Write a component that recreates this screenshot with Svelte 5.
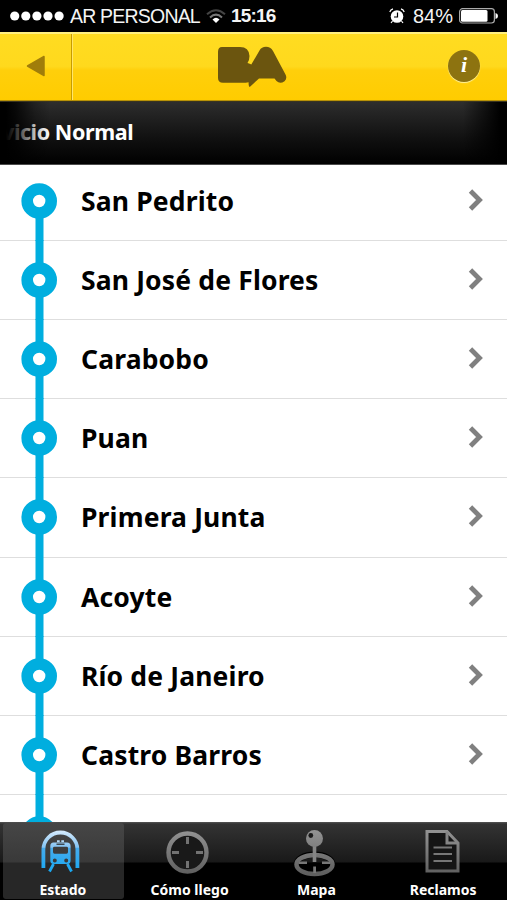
<script>
  const stations = ['San Pedrito', 'San José de Flores', 'Carabobo', 'Puan', 'Primera Junta', 'Acoyte', 'Río de Janeiro', 'Castro Barros', ''];
  const tabs = ['Estado', 'Cómo llego', 'Mapa', 'Reclamos'];
</script>

<div class="phone">
  <div class="status">
    <svg class="dots" width="54" height="10" viewBox="0 0 54 10" fill="#fff">
      {#each [0, 1, 2, 3, 4] as n}<circle cx={4.7 + n * 11.1} cy="5" r="4.6" />{/each}
    </svg>
    <span class="carrier">AR PERSONAL</span>
    <svg class="wifi" width="20" height="15" viewBox="0 0 20 15" fill="none" stroke-width="2">
      <path d="M1 5.2Q10-2.8 19 5.2" stroke="#444" />
      <path d="M4 8.4Q10 2.8 16 8.4" stroke="#777" />
      <path d="M6.5 10.5Q10 7 13.500 10.500L10 14Z" fill="#fff" />
    </svg>
    <span class="time">15:16</span>
    <svg class="alarm" width="16" height="16" viewBox="0 0 16 16">
      <circle cx="8" cy="8.500" r="6.300" fill="#fff" />
      <path d="M.8 4Q1.500 1.500 4 .8M12 .8Q14.500 1.500 15.200 4M3.500 13L2 15M12.500 13L14 15" fill="none" stroke="#fff" stroke-width="1.200" />
      <path d="M8.500 4.500V9H5" fill="none" stroke="#000" stroke-width="1.200" />
    </svg>
    <span class="percent">84%</span>
    <svg class="battery" width="39" height="16" viewBox="0 0 39 16">
      <rect x=".6" y=".7" width="34.800" height="14.300" rx="3" fill="none" stroke="#aaa" stroke-width="1.200" />
      <rect x="2" y="2" width="26.500" height="11.800" rx="1.500" fill="#fff" />
      <path d="M36.500 5Q39 5.500 39 8T36.500 11Z" fill="#fff" />
    </svg>
  </div>

  <header>
    <div class="back">
      <svg width="20" height="22" viewBox="0 0 20 22"><path d="M1.500 11L18 1.500V20.500Z" fill="#a07d0a" stroke="#a07d0a" stroke-width="1.500" stroke-linejoin="round" /></svg>
    </div>
    <svg class="logo" width="70" height="42" viewBox="0 0 70 42" fill="#6b550f">
      <path d="M5 1H23Q32 1 32.500 10Q32.500 14 30.500 17Q33 17.500 34.300 18.500L42.500 4.500Q44.500 .8 49 .8Q53.500 .8 56 5L68.500 28.500Q70.500 32.500 67.500 35.200Q63 38.500 59.500 35L57.500 32.500H42L33 40.800Q31.500 41.500 31.600 36.200Q29 36.800 25 36.800H6Q1 36.800 1 32V6Q1 1 5 1Z" />
    </svg>
    <div class="info"><span>i</span></div>
  </header>

  <div class="banner"><span>vicio Normal</span><div class="shade"></div></div>

  <main>
    {#each stations as station, i}
      <div class="row">
        <svg class="stop" width="36" height="80" viewBox="0 0 36 80">
          <rect x="14.500" y={i === 0 ? 40 : 0} width="8" height={i === 0 ? 40 : 80} fill="#00aedf" />
          <circle cx="18.200" cy="40" r="12" fill="#fff" stroke="#00aedf" stroke-width="11.600" />
        </svg>
        <span class="name">{station}</span>
        <svg class="chevron" width="16" height="22" viewBox="0 0 16 22"><path d="M2.500 2L11.500 11L2.500 20" fill="none" stroke="#808080" stroke-width="4.800" /></svg>
      </div>
    {/each}
  </main>

  <nav>
    {#each tabs as tab, i}
      <div class="tab" class:active={i === 0}>
        <svg width="44" height="51" viewBox="0 -1 44 51" fill="none">
          <defs>
            <linearGradient id="blue" x1="0" y1="8" x2="0" y2="49" gradientUnits="userSpaceOnUse">
              <stop offset="0" stop-color="#d3e9fb" /><stop offset=".4" stop-color="#83c3f3" /><stop offset=".41" stop-color="#48acec" /><stop offset="1" stop-color="#18a8f2" />
            </linearGradient>
            <linearGradient id="gray" x1="0" y1="8" x2="0" y2="50" gradientUnits="userSpaceOnUse">
              <stop offset="0" stop-color="#929292" /><stop offset="1" stop-color="#606060" />
            </linearGradient>
          </defs>
          {#if i === 0}
            <path d="M2.400 45V26.500A17 17 0 0 1 36.400 26.500V45" stroke="url(#blue)" stroke-width="3.800" />
            <path fill="url(#blue)" fill-rule="evenodd" d="M12.500 19.500H26Q29.600 19.500 29.600 23V37.500Q29.600 41 26 41H13Q9.300 41 9.300 37.500V23Q9.300 19.500 12.500 19.500ZM13.500 23.700Q12 23.700 12 25V29Q12 30.700 13.500 30.700H25.500Q27 30.700 27 29V25Q27 23.700 25.500 23.700ZM13.800 35.500A2 2 0 1 0 13.800 39.500A2 2 0 1 0 13.800 35.500M25.200 35.500A2 2 0 1 0 25.200 39.500A2 2 0 1 0 25.200 35.500" />
            <path d="M16 18.300H18.700M20.300 18.300H23" stroke="#b3d9f7" stroke-width="2" />
            <path d="M15.500 21.200H23.500" stroke="#292929" stroke-width="1.200" />
            <path d="M12.500 41L8.500 48.500M26.500 41L30.500 48.500" stroke="url(#blue)" stroke-width="2.800" />
          {:else if i === 1}
            <circle cx="19.500" cy="29.500" r="19" fill="#191919" />
            <circle cx="19.500" cy="29.500" r="19" stroke="url(#gray)" stroke-width="4.400" />
            <path d="M18 14H21V21H18ZM18 38H21V45H18ZM4 28H11V31H4ZM28 28H35V31H28Z" fill="#727272" />
          {:else if i === 2}
            <ellipse cx="19.500" cy="41.500" rx="18" ry="10" stroke="#000" stroke-width="6" />
            <ellipse cx="19.500" cy="41.500" rx="18" ry="9.500" stroke="url(#gray)" stroke-width="4.500" />
            <path d="M4 38.500H12V41H4ZM27 38.500H35V41H27ZM18.200 43.500H21V50H18.200Z" fill="#777" />
            <path d="M17.700 20H21.300V39H17.700Z" fill="#858585" />
            <circle cx="19.500" cy="15.500" r="8.500" fill="url(#gray)" />
            <circle cx="15.800" cy="12.500" r="2.400" fill="#191919" />
          {:else}
            <path d="M5 8.500H25L36 20V48H5Z" fill="#151515" stroke="url(#gray)" stroke-width="3" />
            <path d="M25 8.500V20H36" stroke="#858585" stroke-width="3" />
            <path d="M11.500 24.500H30M11.500 31H30M11.500 38H30" stroke="#777" stroke-width="2" />
          {/if}
        </svg>
        <span>{tab}</span>
      </div>
    {/each}
  </nav>
</div>

<style>
  .phone { width: 507px; height: 900px; overflow: hidden; background: #fff; font-family: "Noto Sans", sans-serif; font-weight: 700; display: flex; flex-direction: column; }
  svg { display: block; flex: none; overflow: visible; }
  .status { height: 32px; flex: none; display: flex; align-items: center; background: #000; color: #f4f4f4; font: 400 20px/32px "Liberation Sans", Arial, sans-serif; white-space: nowrap; }
  .dots { margin-left: 10px; }
  .carrier { width: 136px; margin-left: 6px; font-size: 19.500px; letter-spacing: -.8px; }
  .time { width: 47px; margin-left: 5px; font-weight: 700; font-size: 19px; letter-spacing: -.8px; }
  .alarm { margin-left: 111px; }
  .percent { width: 42px; margin-left: 8px; }
  .battery { margin-left: 4px; }
  header { height: 69px; box-sizing: border-box; flex: none; display: flex; align-items: center; justify-content: space-between; background: linear-gradient(#ffdc21, #ffd91d 49%, #ffcf0b 55%, #fc0); border-top: 2px solid #fff080; border-bottom: 1px solid #b89207; }
  .back { width: 73px; height: 66px; box-sizing: border-box; padding-right: 1px; display: flex; align-items: center; justify-content: center; border-right: 1px solid #ffe66a; box-shadow: inset -1px 0 #c79c00; }
  .back svg { margin-top: -2px; }
  .logo { margin-left: 144px; margin-top: -1px; }
  .info { width: 32px; height: 32px; margin: -3px 27px 0 auto; border-radius: 50%; background: #8d7310; box-shadow: 0 1px 1px #fff3a2; color: #fff; text-align: center; font: italic 700 22px/30px "Liberation Serif", serif; }
  .banner { position: relative; height: 64px; box-sizing: border-box; flex: none; padding-left: 2px; overflow: hidden; border-top: 1px solid #39341f; border-bottom: 1px solid #4b4b4b; background: linear-gradient(#2d2d2d, #101010 60%, #000); color: #fff; font-size: 21.500px; line-height: 59px; letter-spacing: -.4px; white-space: nowrap; }
  .shade { position: absolute; inset: 0; background: linear-gradient(90deg, #000 0, #000 6px, rgba(0,0,0,.8) 16px, rgba(0,0,0,.25) 35px, transparent 50px, transparent 463px, #000 500px); }
  main { height: 657px; flex: none; overflow: hidden; }
  .row { height: 79.250px; box-sizing: border-box; display: flex; align-items: center; border-bottom: 1.500px solid #dedede; color: #000; }
  .row:first-child { height: 75.600px; padding-bottom: 3px; }
  .stop { margin-left: 21px; }
  .name { flex: 1; margin-left: 24px; font-size: 26.500px; line-height: 36px; letter-spacing: .15px; white-space: nowrap; }
  .chevron { margin-right: 23px; margin-bottom: 2px; }
  nav { height: 79px; box-sizing: border-box; flex: none; display: flex; background: linear-gradient(#555 0, #333 2px, #191919 40px, #000 41px); }
  .tab { flex: 1; position: relative; display: flex; flex-direction: column; align-items: center; color: #fff; font-size: 14px; line-height: 20px; }
  .tab span { margin-top: 7px; margin-right: 1px; }
  .active::before { content: ""; position: absolute; left: 3px; right: 3px; top: 1px; bottom: 2px; border-radius: 3px; background: linear-gradient(#464646, #393939 39px, #272727 40px, #272727); }
  .active svg, .active span { position: relative; }
</style>
